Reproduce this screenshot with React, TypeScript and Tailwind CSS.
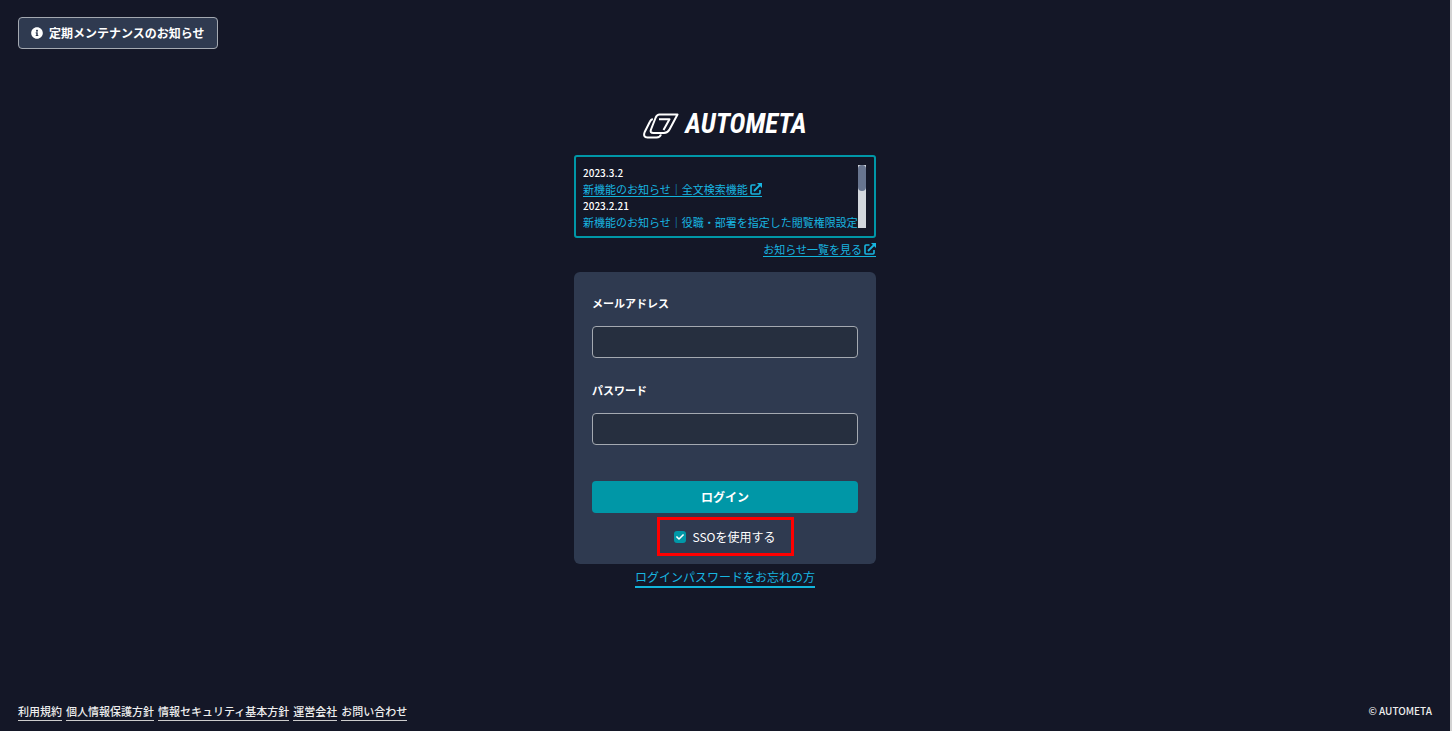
import { FaCheck, FaInfoCircle } from 'react-icons/fa'

const NEWS = [
  { date: '2023.3.2', title: '新機能のお知らせ｜全文検索機能' },
  { date: '2023.2.21', title: '新機能のお知らせ｜役職・部署を指定した閲覧権限設定' },
]

const FOOTER_LINKS = ['利用規約', '個人情報保護方針', '情報セキュリティ基本方針', '運営会社', 'お問い合わせ']

function ExternalIcon() {
  return (
    <svg viewBox="0 0 12 12" className="size-3 shrink-0" fill="none" stroke="currentColor">
      <path d="M5.500 2H2Q1 2 1 3V10Q1 11 2 11H9Q10 11 10 10V7" strokeWidth="1.600" />
      <path d="M4 8L10 2" strokeWidth="1.800" />
      <path d="M7 0H12V5Z" fill="currentColor" stroke="none" />
    </svg>
  )
}

function Logo() {
  return (
    <h1 className="flex items-center justify-center gap-1.5 text-white">
      <svg viewBox="0 0 36 26" className="h-[26px] w-9" fill="none" stroke="currentColor" strokeWidth="2" strokeLinejoin="round">
        <path d="M16.500 1.500H34.500L26.500 16.500Q24.600 20 21 20H10.500Q6.500 20 8 16.500L12.700 4.500Q14 1.500 16.500 1.500Z" />
        <path d="M9.800 6Q8 6.400 7 8.500L1.700 19Q-.3 24.300 4.500 24.500H13.500Q17 24.500 18 21.500" />
        <path d="M16 6.300H26.500L20.500 17" />
      </svg>
      <span className="pb-1 font-['Roboto_Condensed',sans-serif] text-[27px] leading-6 font-bold italic">AUTOMETA</span>
    </h1>
  )
}

function TextField({ id, label, type }: { id: string; label: string; type: string }) {
  return (
    <div className="flex flex-col gap-[13px]">
      <label htmlFor={id} className="text-[11px] leading-5 font-bold">
        {label}
      </label>
      <input
        id={id}
        type={type}
        className="h-8 w-full rounded border border-[#a4a9b1] bg-[#262f3f] px-2 text-xs outline-none"
      />
    </div>
  )
}

export default function App() {
  return (
    <div className="flex min-h-screen flex-col border-r-2 border-[#d3d3d3] bg-[#141727] font-['Noto_Sans_CJK_JP',sans-serif] text-white">
      <header className="px-[18px] pt-[17px]">
        <button type="button" className="flex h-8 items-center gap-1.5 rounded border border-[#a4a9b1] bg-[#2f3a50] px-3 text-xs font-bold">
          <FaInfoCircle className="size-3" />
          定期メンテナンスのお知らせ
        </button>
      </header>

      <main className="mx-auto flex w-[302px] max-w-full flex-1 flex-col pt-[63px]">
        <Logo />

        {/* News */}
        <section className="mt-[15px] flex h-[83px] rounded-[3px] border-2 border-[#0097a7] py-2 pr-2 pl-[7px]">
          <ul className="min-w-0 flex-1 overflow-hidden whitespace-nowrap">
            {NEWS.map((item) => (
              <li key={item.date} className="flex h-[33px] flex-col items-start">
                <time className="text-[10px] leading-4 font-medium">{item.date}</time>
                <a href="#" className="flex h-4 items-center gap-0.5 border-b border-[#12b5dc] text-[11px] leading-4 text-[#18b5e0]">
                  {item.title}
                  <ExternalIcon />
                </a>
              </li>
            ))}
          </ul>
          <div className="w-2 bg-[#d3d7dd]">
            <div className="h-[26px] rounded-sm bg-[#68758f]" />
          </div>
        </section>
        <a href="#" className="mt-[3px] flex h-4 items-center gap-0.5 self-end border-b border-[#12b5dc] text-[11px] leading-4 text-[#18b5e0]">
          お知らせ一覧を見る
          <ExternalIcon />
        </a>

        {/* Login form */}
        <form className="mt-[15px] flex flex-col rounded-md bg-[#2f3a50] px-[18px] pt-[21px] pb-2">
          <div className="flex flex-col gap-[22px]">
            <TextField id="email" label="メールアドレス" type="email" />
            <TextField id="password" label="パスワード" type="password" />
          </div>
          <button type="button" className="mt-9 h-8 rounded bg-[#0097a7] text-xs font-bold">
            ログイン
          </button>
          <label className="mt-1 flex h-[39px] w-[137px] items-center justify-center gap-1.5 self-center border-3 border-[#ff0000] text-xs">
            <span className="grid">
              <input type="checkbox" defaultChecked className="peer col-start-1 row-start-1 size-3 appearance-none rounded-[3px] bg-[#262f3f] checked:bg-[#0097a7]" />
              <FaCheck className="pointer-events-none col-start-1 row-start-1 hidden size-2 self-center justify-self-center peer-checked:block" />
            </span>
            SSOを使用する
          </label>
        </form>
        <a href="#" className="mt-1 self-center border-b-2 border-[#12b5dc] text-xs leading-[18px] text-[#18b5e0]">
          ログインパスワードをお忘れの方
        </a>
      </main>

      <footer className="flex items-start justify-between px-[18px] pb-2.5 text-[11px] leading-[17px] font-medium text-[#eeeeee]">
        <nav className="flex gap-1">
          {FOOTER_LINKS.map((label) => (
            <a key={label} href="#" className="border-b border-[#cccccc]">
              {label}
            </a>
          ))}
        </nav>
        <small className="text-[10px] leading-4">© AUTOMETA</small>
      </footer>
    </div>
  )
}
